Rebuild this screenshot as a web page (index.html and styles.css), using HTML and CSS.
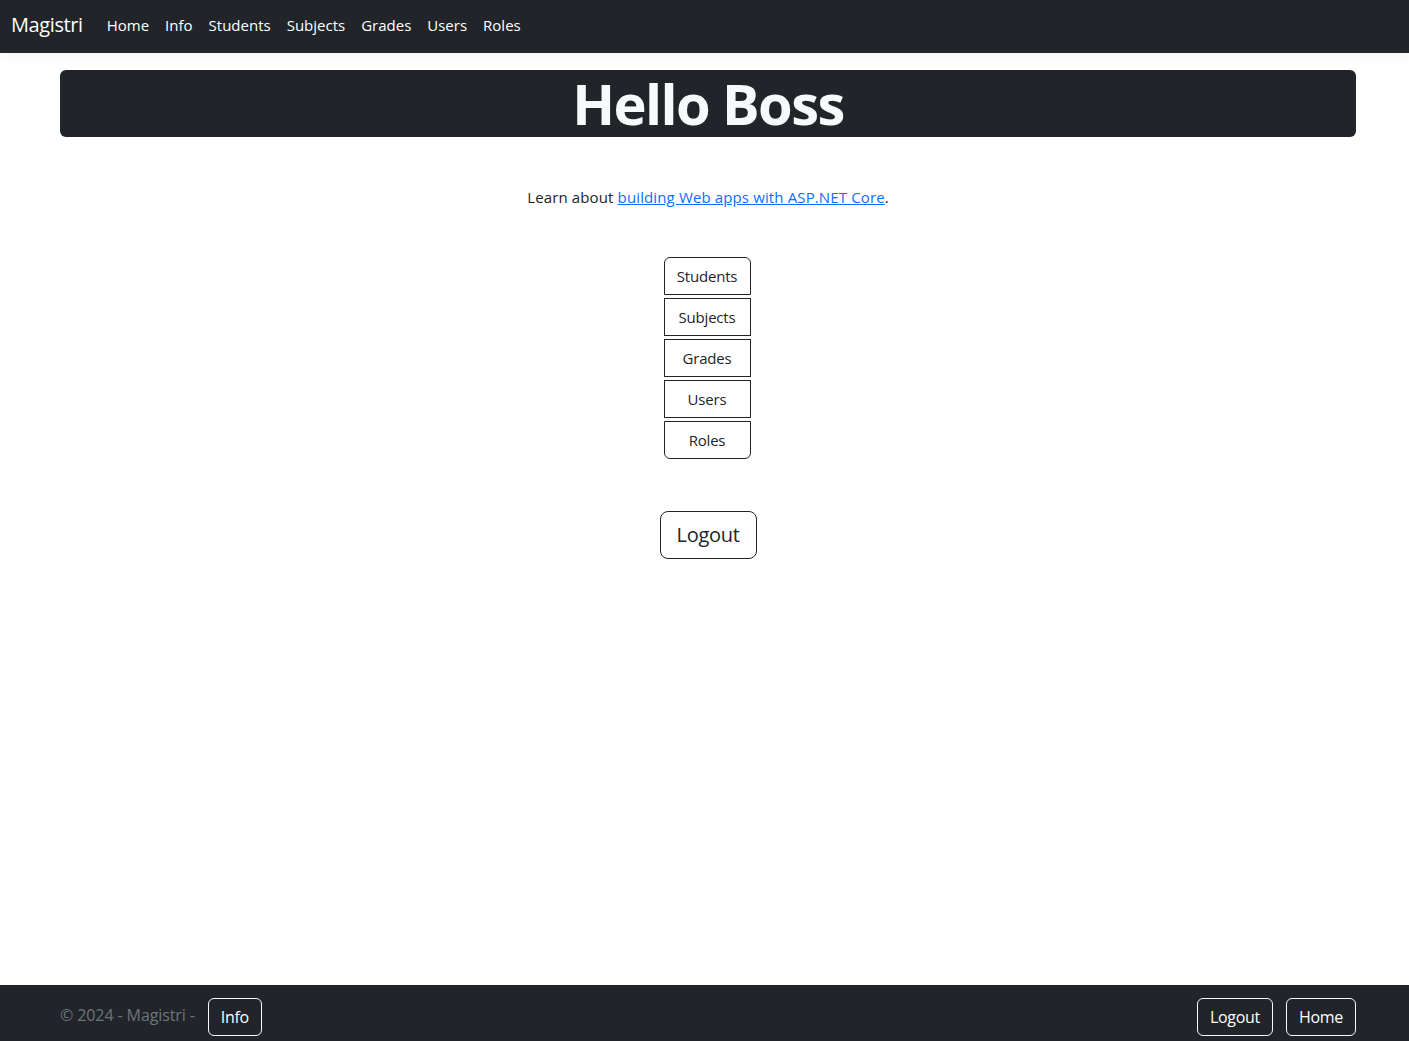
FILE: index.html
```html
<!DOCTYPE html>
<html lang="en">
<head>
<meta charset="utf-8">
<title>Home - Magistri</title>
<link rel="stylesheet" href="styles.css">
</head>
<body>
<header class="topbar">
  <nav class="navbar">
    <a class="brand" href="#">Magistri</a>
    <ul class="nav-links">
      <li><a href="#">Home</a></li>
      <li><a href="#">Info</a></li>
      <li><a href="#">Students</a></li>
      <li><a href="#">Subjects</a></li>
      <li><a href="#">Grades</a></li>
      <li><a href="#">Users</a></li>
      <li><a href="#">Roles</a></li>
    </ul>
  </nav>
</header>
<main class="container">
  <h1 class="hero">Hello Boss</h1>
  <p class="learn">Learn about <a href="#">building Web apps with ASP.NET Core</a>.</p>
  <div class="stack">
    <a class="btn btn-first" href="#">Students</a>
    <a class="btn" href="#">Subjects</a>
    <a class="btn" href="#">Grades</a>
    <a class="btn" href="#">Users</a>
    <a class="btn btn-last" href="#">Roles</a>
  </div>
  <div class="logout-row">
    <a class="btn btn-lg" href="#">Logout</a>
  </div>
</main>
<footer class="footer">
  <div class="footer-inner">
    <div class="footer-left">
      <span class="copy">&copy; 2024 - Magistri -</span>
      <a class="btn btn-light" href="#">Info</a>
    </div>
    <div class="footer-right">
      <a class="btn btn-light" href="#">Logout</a>
      <a class="btn btn-light" href="#">Home</a>
    </div>
  </div>
</footer>
</body>
</html>
```
FILE: styles.css
```css
* { box-sizing: border-box; }
html, body { margin: 0; padding: 0; }
body {
  font-family: "Open Sans", "Noto Sans", sans-serif;
  font-size: 16px;
  line-height: 1.5;
  color: #212529;
  background: #fff;
  min-height: 100vh;
  display: flex;
  flex-direction: column;
}
a { color: #0d6efd; }

.topbar {
  background: #212529;
  height: 53px;
  box-shadow: 0 4px 12px rgba(0,0,0,0.05);
  position: relative;
  z-index: 1;
}
.navbar {
  height: 50px;
  display: flex;
  align-items: center;
  padding: 0 12px 0 11px;
}
.brand {
  color: #fff;
  text-decoration: none;
  font-size: 20px;
  margin-right: 16px;
  letter-spacing: -0.4px;
}
.nav-links {
  list-style: none;
  margin: 0;
  padding: 0;
  display: flex;
}
.nav-links a {
  display: block;
  color: #fff;
  text-decoration: none;
  padding: 8px 8px;
  font-size: 15px;
}

.container {
  width: 1296px;
  margin: 0 0 0 60px;
  flex: 1;
  display: flex;
  flex-direction: column;
  align-items: center;
}
.hero {
  align-self: stretch;
  margin: 17px 0 0;
  background: #212529;
  color: #f8f9fa;
  border-radius: 6px;
  text-align: center;
  font-size: 56px;
  font-weight: 700;
  line-height: 67px;
  height: 67px;
  letter-spacing: -1.6px;
}
.learn {
  margin: 48px 0 0;
  font-size: 15px;
  letter-spacing: 0.13px;
  line-height: 24px;
}
.stack {
  margin-top: 48px;
  display: flex;
  flex-direction: column;
  gap: 3px;
  transform: translateX(-1px);
}
.btn {
  display: flex;
  align-items: center;
  justify-content: center;
  border: 1px solid #212529;
  color: #212529;
  text-decoration: none;
  font-size: 15px;
  letter-spacing: -0.2px;
}
.stack .btn {
  width: 87px;
  height: 38px;
}
.btn-first { border-radius: 6px 6px 0 0; }
.btn-last { border-radius: 0 0 6px 6px; }
.logout-row {
  margin-top: 52px;
}
.btn-lg {
  width: 97px;
  height: 48px;
  font-size: 20px;
  border-radius: 8px;
  letter-spacing: -0.3px;
}

.footer {
  background: #212529;
  height: 56px;
  margin-top: auto;
}
.footer-inner {
  width: 1296px;
  margin: 0 0 0 60px;
  height: 56px;
  display: flex;
  justify-content: space-between;
  align-items: center;
  padding-top: 7px;
}
.footer-left, .footer-right {
  display: flex;
  align-items: center;
}
.footer-right { gap: 13px; }
.copy {
  color: #6c757d;
  margin-right: 13px;
  font-size: 16px;
  letter-spacing: -0.1px;
  margin-top: -3px;
}
.btn-light {
  border-color: #f8f9fa;
  color: #fff;
  border-radius: 6px;
  height: 38px;
  padding: 0 12px;
  font-size: 16px;
  letter-spacing: -0.3px;
}
```
